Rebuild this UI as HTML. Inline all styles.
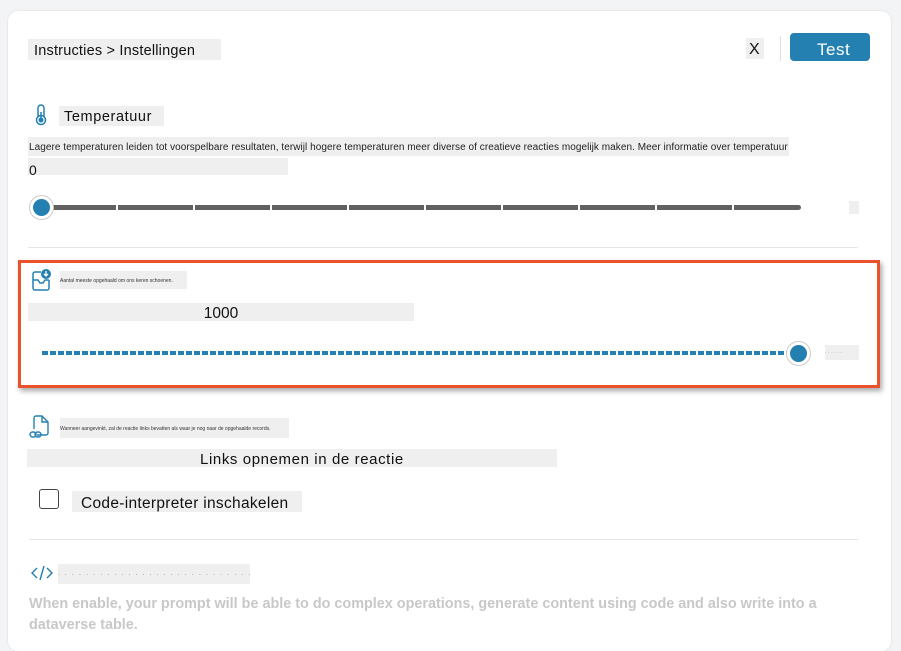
<!DOCTYPE html>
<html><head><meta charset="utf-8"><style>
*{margin:0;padding:0;box-sizing:border-box}
body{width:901px;height:635px;background:#f3f4f6;font-family:"Liberation Sans","DejaVu Sans",sans-serif;position:relative;overflow:hidden;color:#111}
.card{position:absolute;left:8px;top:11px;width:883px;height:640px;background:#fff;border-radius:10px;box-shadow:0 0 2px rgba(0,0,0,.12)}
.a{position:absolute}
.g{background:#efefef}
.t{font-size:15px;white-space:nowrap}
.tiny{font-size:5px;color:#333;white-space:nowrap;overflow:hidden}
</style></head><body>
<div class="card"></div>
<div class="a g t" style="left:28px;top:39px;width:193px;height:21px;padding:4px 6px 0;font-size:14.5px;letter-spacing:.2px">Instructies &gt; Instellingen</div>
<div class="a g t" style="left:746px;top:38px;width:18px;height:21px;padding:3px 0 0 3px;font-size:16px">X</div>
<div class="a" style="left:780px;top:36px;width:1px;height:25px;background:#e0e0e0"></div>
<div class="a" style="left:790px;top:33px;width:80px;height:28px;background:#2480b0;border-radius:4px;color:#fff;font-size:17px;padding:7px 0 0 27px;letter-spacing:.5px">Test</div>

<svg class="a" style="left:34px;top:104px" width="14" height="22" viewBox="0 0 14 22"><rect x="4" y="1" width="6" height="14" rx="3" fill="none" stroke="#2480b0" stroke-width="1.5"/><circle cx="7" cy="16" r="4.5" fill="#fff" stroke="#2480b0" stroke-width="1.5"/><circle cx="7" cy="16" r="2.5" fill="#2480b0"/><line x1="7" y1="8" x2="7" y2="15" stroke="#2480b0" stroke-width="1.5"/></svg>
<div class="a g t" style="left:59px;top:106px;width:105px;height:20px;padding:3px 5px 0;font-size:14.5px;letter-spacing:.6px">Temperatuur</div>
<div class="a g" style="left:28px;top:137px;width:761px;height:19px;font-size:10px;padding:5px 1px 0;white-space:nowrap;overflow:hidden;color:#222;letter-spacing:.05px">Lagere temperaturen leiden tot voorspelbare resultaten, terwijl hogere temperaturen meer diverse of creatieve reacties mogelijk maken. Meer informatie over temperatuur</div>
<div class="a g t" style="left:28px;top:158px;width:260px;height:17px;padding:4px 1px 0;font-size:14px">0</div>
<div class="a" style="left:41px;top:205px;width:760px;height:5px;border-radius:3px;background:repeating-linear-gradient(90deg,#616161 0 75px,#fff 75px 77px)"></div>
<div class="a" style="left:29px;top:195px;width:25px;height:25px;border-radius:50%;background:#fff;border:1px solid #ccc"></div>
<div class="a" style="left:33px;top:199px;width:17px;height:17px;border-radius:50%;background:#2480b0"></div>
<div class="a g" style="left:849px;top:201px;width:10px;height:13px"></div>
<div class="a" style="left:28px;top:247px;width:830px;height:1px;background:#e6e6e6"></div>

<div class="a" style="left:18px;top:260px;width:862px;height:128px;border:3px solid #e9522b;box-shadow:2px 3px 5px rgba(0,0,0,.35)"></div>
<svg class="a" style="left:32px;top:268px" width="20" height="24" viewBox="0 0 20 24"><path d="M9 4H3a2 2 0 0 0-2 2v14a2 2 0 0 0 2 2h12a2 2 0 0 0 2-2v-8" fill="none" stroke="#2480b0" stroke-width="1.5"/><path d="M1 12h5l2 3h3l2-3h4" fill="none" stroke="#2480b0" stroke-width="1.5"/><circle cx="14" cy="6" r="5" fill="#2480b0"/><path d="M14 3v5M12 6l2 2 2-2" stroke="#fff" stroke-width="1.3" fill="none"/></svg>
<div class="a g tiny" style="left:60px;top:271px;width:127px;height:18px;padding-top:7px">Aantal meeste opgehaald om ons keren schoenen.</div>
<div class="a g t" style="left:28px;top:303px;width:386px;height:18px;text-align:center;font-size:15.5px;line-height:22px">1000</div>
<div class="a" style="left:42px;top:351px;width:750px;height:4px;background:repeating-linear-gradient(90deg,#2480b0 0 6px,#fff 6px 8px)"></div>
<div class="a" style="left:786px;top:341px;width:25px;height:25px;border-radius:50%;background:#fff;border:1px solid #ccc"></div>
<div class="a" style="left:790px;top:345px;width:17px;height:17px;border-radius:50%;background:#2480b0"></div>
<div class="a g tiny" style="left:825px;top:345px;width:34px;height:15px;padding-top:5px;color:#888">· · · · · ·</div>

<svg class="a" style="left:29px;top:414px" width="22" height="26" viewBox="0 0 22 26"><path d="M8 21h9a2 2 0 0 0 2-2V8l-6-6H7a2 2 0 0 0-2 2v11" fill="none" stroke="#2480b0" stroke-width="1.4"/><path d="M13 2v6h6" fill="none" stroke="#2480b0" stroke-width="1.4"/><rect x="1" y="18" width="6" height="5" rx="2.5" fill="none" stroke="#2480b0" stroke-width="1.4"/><rect x="6" y="18" width="6" height="5" rx="2.5" fill="none" stroke="#2480b0" stroke-width="1.4"/></svg>
<div class="a g tiny" style="left:60px;top:418px;width:229px;height:20px;padding-top:8px">Wanneer aangevinkt, zal de reactie links bevatten als waar je nog naar de opgehaalde records.</div>
<div class="a g t" style="left:27px;top:449px;width:530px;height:18px;padding-left:173px;font-size:15px;line-height:21px;letter-spacing:.6px">Links opnemen in de reactie</div>
<div class="a" style="left:39px;top:489px;width:20px;height:20px;border:1.5px solid #444;border-radius:3px"></div>
<div class="a g t" style="left:72px;top:491px;width:230px;height:21px;padding:4px 9px 0;font-size:15.5px;letter-spacing:.3px">Code-interpreter inschakelen</div>
<div class="a" style="left:29px;top:539px;width:829px;height:1px;background:#e6e6e6"></div>
<svg class="a" style="left:31px;top:565px" width="22" height="16" viewBox="0 0 22 16"><path d="M6 3 1 8l5 5M16 3l5 5-5 5M13 1 9 15" fill="none" stroke="#2480b0" stroke-width="1.4"/></svg>
<div class="a g tiny" style="left:58px;top:564px;width:192px;height:20px;padding-top:8px;letter-spacing:2px">· · · · · · · · · · · · · · · · · · · · · · · · · · · · · · ·</div>
<div class="a" style="left:29px;top:594px;width:860px;white-space:nowrap;font-size:14.4px;font-weight:bold;color:#c8c8c8;line-height:21px">When enable, your prompt will be able to do complex operations, generate content using code and also write into a<br>dataverse table.</div>
</body></html>
